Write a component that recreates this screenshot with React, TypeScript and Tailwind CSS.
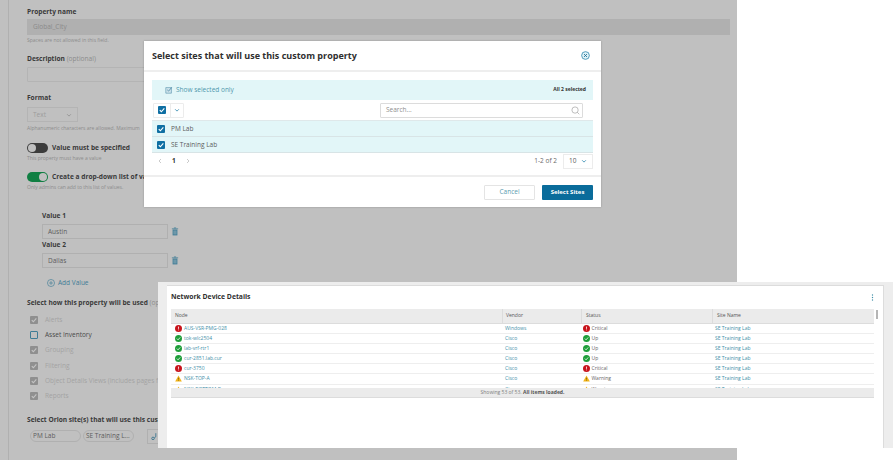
import React from "react";

const Check = ({ c = "white" }: { c?: string }) => (
  <svg viewBox="0 0 10 10" className="w-full h-full"><path d="M2.2 5.2 4.2 7.2 7.9 3" fill="none" stroke={c} strokeWidth="1.4" /></svg>
);

const Box = () => (
  <div className="w-[8px] h-[8px] rounded-[1px] bg-[#0f6fa3] shrink-0"><Check /></div>
);

const GrayCheck = ({ label }: { label: string }) => (
  <div className="h-[15.3px] flex items-center gap-[7px] pl-[3px]">
    <div className="w-[8px] h-[8px] rounded-[1px] bg-[#8f8f8f]"><Check c="#c4c4c4" /></div>
    <span className="text-[6.5px] text-[#a3a3a3] whitespace-nowrap">{label}</span>
  </div>
);

const Trash = ({ cls }: { cls: string }) => (
  <svg viewBox="0 0 10 12" className={cls}>
    <path d="M3.5 1.2h3M.8 2.4h8.4" stroke="#3f7c96" strokeWidth="1" fill="none" />
    <path d="M1.8 3.4h6.4v7.8H1.8z" fill="#3f7c96" />
    <path d="M3.6 4.6v5.4M5 4.6v5.4M6.4 4.6v5.4" stroke="#bcc8cc" strokeWidth=".6" />
  </svg>
);

const StatusIcon = ({ s }: { s: "Critical" | "Up" | "Warning" }) => {
  if (s === "Warning")
    return (
      <svg viewBox="0 0 8 8" className="w-[7px] h-[7px] shrink-0">
        <path d="M4 .6 7.8 7.5H.2z" fill="#f2b418" />
        <path d="M4 3v2.3M4 5.9v.7" stroke="#5b4a10" strokeWidth=".7" />
      </svg>
    );
  if (s === "Up")
    return (
      <svg viewBox="0 0 8 8" className="w-[7px] h-[7px] shrink-0">
        <circle cx="4" cy="4" r="4" fill="#1f9e3a" />
        <path d="M2.1 4.1 3.5 5.5 5.9 2.8" stroke="white" strokeWidth=".9" fill="none" />
      </svg>
    );
  return (
    <svg viewBox="0 0 8 8" className="w-[7px] h-[7px] shrink-0">
      <circle cx="4" cy="4" r="4" fill="#c8141c" />
      <path d="M4 1.8v2.6M4 5.2v.9" stroke="white" strokeWidth=".9" />
    </svg>
  );
};

const rows: [string, string, "Critical" | "Up" | "Warning"][] = [
  ["AUS-VSR-PMG-028", "Windows", "Critical"],
  ["tok-wlc2504", "Cisco", "Up"],
  ["lab-vrf-rtr1", "Cisco", "Up"],
  ["cur-2851.lab.cur", "Cisco", "Up"],
  ["cur-3750", "Cisco", "Critical"],
  ["NSK-TOP-A", "Cisco", "Warning"],
  ["NSK-BOTTOM-B", "Cisco", "Warning"],
];

const gridCols = "grid grid-cols-[331px_79px_131px_162px]";

export default function App() {
  return (
    <div className="relative w-[893px] h-[460px] overflow-hidden bg-white font-['Open_Sans',sans-serif]">
      {/* Dimmed page */}
      <div className="w-[737px] h-[460px] bg-[#c0c0c0] pl-[8px]">
        <div className="h-full border-l border-[#b0b0b0] pl-[18px] pr-[7px] pt-[7px]">
          <div className="text-[6.6px] leading-[10px] font-bold text-[#3a3a3a]">Property name</div>
          <div className="mt-[2px] h-[16px] bg-[#b0b0b0] flex items-center px-[6px] text-[6.5px] text-[#8a8a8a]">Global_City</div>
          <div className="mt-[1px] text-[5px] leading-[8px] text-[#8c8c8c]">Spaces are not allowed in this field.</div>

          <div className="mt-[10px] text-[6.6px] leading-[10px] font-bold text-[#3a3a3a]">
            Description <span className="font-normal text-[#8c8c8c]">(optional)</span>
          </div>
          <div className="mt-[3px] h-[15px] w-[200px] border border-[#b4b4b4] rounded-[1px]" />

          <div className="mt-[11px] text-[6.6px] leading-[10px] font-bold text-[#3a3a3a]">Format</div>
          <div className="mt-[4px] w-[51px] h-[15px] border border-[#b4b4b4] flex items-center justify-between px-[5px] text-[6.5px] text-[#9c9c9c]">
            Text
            <svg viewBox="0 0 8 8" className="w-[6px] h-[6px]"><path d="M1.5 3 4 5.5 6.5 3" stroke="#8a8a8a" fill="none" /></svg>
          </div>
          <div className="mt-[2px] text-[5px] leading-[8px] text-[#8c8c8c] whitespace-nowrap">Alphanumeric characters are allowed. Maximum</div>

          <div className="mt-[11px] flex items-center gap-[4px] h-[10px]">
            <div className="w-[21px] h-[10px] rounded-full bg-[#3c3c3c] flex items-center pl-[1px]">
              <div className="w-[8px] h-[8px] rounded-full bg-[#c0c0c0]" />
            </div>
            <span className="text-[6.6px] font-bold text-[#3a3a3a]">Value must be specified</span>
          </div>
          <div className="mt-[1px] text-[5px] leading-[8px] text-[#8c8c8c]">This property must have a value</div>

          <div className="mt-[10px] flex items-center gap-[4px] h-[10px]">
            <div className="w-[21px] h-[10px] rounded-full bg-[#107f43] flex items-center justify-end pr-[1px]">
              <div className="w-[8px] h-[8px] rounded-full bg-[#c0c0c0]" />
            </div>
            <span className="text-[6.6px] font-bold text-[#3a3a3a] whitespace-nowrap">Create a drop-down list of values</span>
          </div>
          <div className="mt-[1px] text-[5px] leading-[8px] text-[#8c8c8c]">Only admins can add to this list of values.</div>

          <div className="pl-[15px] mt-[20px]">
            <div className="text-[6.6px] leading-[10px] font-bold text-[#3a3a3a]">Value 1</div>
            <div className="mt-[3px] flex items-center gap-[3px]">
              <div className="w-[126px] h-[15px] border border-[#b0b0b0] flex items-center px-[5px] text-[6.5px] text-[#5c5c5c]">Austin</div>
              <Trash cls="w-[8px] h-[9px]" />
            </div>
            <div className="mt-[1px] text-[6.6px] leading-[10px] font-bold text-[#3a3a3a]">Value 2</div>
            <div className="mt-[3px] flex items-center gap-[3px]">
              <div className="w-[126px] h-[15px] border border-[#b0b0b0] flex items-center px-[5px] text-[6.5px] text-[#5c5c5c]">Dallas</div>
              <Trash cls="w-[8px] h-[9px]" />
            </div>
            <div className="mt-[10px] ml-[5px] flex items-center gap-[3px] h-[10px]">
              <svg viewBox="0 0 10 10" className="w-[8px] h-[8px]">
                <circle cx="5" cy="5" r="4.4" fill="none" stroke="#3f7c96" strokeWidth=".8" />
                <path d="M5 2.6v4.8M2.6 5h4.8" stroke="#3f7c96" strokeWidth=".8" />
              </svg>
              <span className="text-[6.5px] text-[#3f7c96]">Add Value</span>
            </div>
          </div>

          <div className="mt-[10px] text-[6.6px] leading-[10px] font-bold text-[#3a3a3a] whitespace-nowrap">
            Select how this property will be used <span className="font-normal text-[#8c8c8c]">(optional)</span>
          </div>
          <div className="mt-[4px]">
            <GrayCheck label="Alerts" />
            <div className="h-[15.3px] flex items-center gap-[7px] pl-[3px]">
              <div className="w-[8px] h-[8px] rounded-[1px] border border-[#3f7c96]" />
              <span className="text-[6.5px] text-[#4a4a4a]">Asset Inventory</span>
            </div>
            <GrayCheck label="Grouping" />
            <GrayCheck label="Filtering" />
            <GrayCheck label="Object Details Views (includes pages for" />
            <GrayCheck label="Reports" />
          </div>

          <div className="mt-[11px] text-[6.6px] leading-[10px] font-bold text-[#3a3a3a] whitespace-nowrap">Select Orion site(s) that will use this custom property</div>
          <div className="mt-[4px] flex items-center gap-[2px] pl-[3px]">
            <div className="w-[51px] h-[12px] rounded-full border border-[#b0b0b0] flex items-center px-[2px] text-[6.5px] text-[#5c5c5c]">PM Lab</div>
            <div className="w-[51px] h-[12px] rounded-full border border-[#b0b0b0] flex items-center px-[2px] text-[6.5px] text-[#5c5c5c] whitespace-nowrap">SE Training L...</div>
            <div className="ml-[11px] w-[16px] h-[15px] border border-[#b0b0b0] flex items-center justify-center">
              <svg viewBox="0 0 10 10" className="w-[8px] h-[8px]">
                <circle cx="2.5" cy="8" r="1.6" fill="none" stroke="#2f6f8c" />
                <path d="M4 7.5 6 6V1.5" stroke="#2f6f8c" fill="none" />
              </svg>
            </div>
          </div>
        </div>
      </div>

      {/* Modal */}
      <div className="absolute left-[144px] top-[41px] w-[457px] h-[166px] bg-white shadow-[0_0_2px_rgba(0,0,0,0.25)] flex flex-col">
        <div className="h-[31px] flex items-center justify-between pl-[8px] pr-[11px] border-b-2 border-[#eeeeee] shrink-0">
          <span className="text-[9px] font-bold text-[#2f2f2f]">Select sites that will use this custom property</span>
          <svg viewBox="0 0 10 10" className="w-[9px] h-[9px]">
            <circle cx="5" cy="5" r="4.3" fill="#dff1f6" stroke="#1f7fa8" strokeWidth=".8" />
            <path d="M3.4 3.4 6.6 6.6M6.6 3.4 3.4 6.6" stroke="#1f6f95" strokeWidth="1" />
          </svg>
        </div>

        <div className="px-[8px] pt-[8px] flex-1">
          <div className="h-[20px] bg-[#e2f6f8] flex items-center justify-between pl-[13px] pr-[7px]">
            <div className="flex items-center gap-[3px]">
              <svg viewBox="0 0 10 10" className="w-[8px] h-[8px]">
                <path d="M1 2h7v7H1z" fill="#cfe4ec" stroke="#4c8aa6" strokeWidth=".7" />
                <path d="M2.8 4.8 4.5 6.4 8.5 1.6" stroke="#3c7c9a" fill="none" strokeWidth=".9" />
              </svg>
              <span className="text-[6.5px] text-[#4f97ad]">Show selected only</span>
            </div>
            <span className="text-[5px] font-bold text-[#333333]">All 2 selected</span>
          </div>

          <div className="h-[20px] flex items-center justify-between">
            <div className="ml-[1px] h-[15px] w-[31px] flex border border-[#ececec] rounded-[1px]">
              <div className="w-[17px] flex items-center justify-center border-r border-[#ececec]"><Box /></div>
              <div className="flex-1 flex items-center justify-center">
                <svg viewBox="0 0 8 8" className="w-[6px] h-[6px]"><path d="M1.5 3 4 5.5 6.5 3" stroke="#1f7fa8" fill="none" strokeWidth="1" /></svg>
              </div>
            </div>
            <div className="mr-[10px] w-[203px] h-[15px] border border-[#dcdcdc] rounded-[1px] flex items-center justify-between pl-[5px] pr-[2px]">
              <span className="text-[6.5px] text-[#8f8f8f]">Search...</span>
              <svg viewBox="0 0 10 10" className="w-[9px] h-[9px]">
                <circle cx="4.5" cy="4.5" r="3.5" fill="none" stroke="#9a9a9a" strokeWidth=".7" />
                <path d="M7 7 9.2 9.2" stroke="#9a9a9a" strokeWidth=".7" />
              </svg>
            </div>
          </div>

          <div className="border-t border-[#dfe8ea]">
            <div className="h-[16px] bg-[#e2f6f8] border-b border-[#d8e4e6] flex items-center gap-[6px] pl-[5px]">
              <Box />
              <span className="text-[6.5px] text-[#5c5c5c]">PM Lab</span>
            </div>
            <div className="h-[16px] bg-[#e2f6f8] border-b border-[#d8e4e6] flex items-center gap-[6px] pl-[5px]">
              <Box />
              <span className="text-[6.5px] text-[#5c5c5c]">SE Training Lab</span>
            </div>
          </div>

          <div className="h-[16px] flex items-center justify-between">
            <div className="flex items-center gap-[10px] pl-[6px]">
              <svg viewBox="0 0 6 8" className="w-[4px] h-[6px]"><path d="M4.5 1 1.5 4l3 3" stroke="#b0b0b0" fill="none" /></svg>
              <span className="text-[6.5px] font-bold text-[#333333]">1</span>
              <svg viewBox="0 0 6 8" className="w-[4px] h-[6px]"><path d="M1.5 1l3 3-3 3" stroke="#b0b0b0" fill="none" /></svg>
            </div>
            <div className="flex items-center gap-[6px]">
              <span className="text-[6.5px] text-[#6a6a6a]">1-2 of 2</span>
              <div className="w-[30px] h-[15px] border border-[#ececec] flex items-center justify-between px-[5px]">
                <span className="text-[6.5px] text-[#5c5c5c]">10</span>
                <svg viewBox="0 0 8 8" className="w-[6px] h-[6px]"><path d="M1.5 3 4 5.5 6.5 3" stroke="#1f7fa8" fill="none" /></svg>
              </div>
            </div>
          </div>
        </div>

        <div className="h-[32px] border-t-2 border-[#eeeeee] flex items-center justify-end gap-[7px] pr-[8px] shrink-0">
          <div className="w-[51px] h-[15px] border border-[#e4e4e4] rounded-[1px] flex items-center justify-center text-[6.5px] text-[#5b9bb0]">Cancel</div>
          <div className="w-[51px] h-[15px] bg-[#0a6c9b] rounded-[1px] flex items-center justify-center text-[6px] font-bold text-white">Select Sites</div>
        </div>
      </div>

      {/* Network Device Details */}
      <div className="absolute left-[158px] top-[282px] w-[735px] h-[166px] bg-[#ededed] pl-[9px] pr-[9px] pt-[3px]">
        <div className="h-full bg-white border-t border-r border-[#dcdcdc] pl-[4px]">
          <div className="h-[23px] flex items-center justify-between pr-[9px]">
            <span className="text-[6.8px] font-bold text-[#2f2f2f]">Network Device Details</span>
            <svg viewBox="0 0 4 10" className="w-[3px] h-[7px]">
              <circle cx="2" cy="1.5" r="1" fill="#3f8fa8" />
              <circle cx="2" cy="5" r="1" fill="#3f8fa8" />
              <circle cx="2" cy="8.5" r="1" fill="#3f8fa8" />
            </svg>
          </div>
          <div className="flex">
            <div className="w-[703px]">
              <div className={`${gridCols} h-[15px] bg-[#ebebeb] border-b border-[#dcdcdc] text-[5px] text-[#555555]`}>
                <div className="flex items-center pl-[4px]">Node</div>
                <div className="flex items-center pl-[3px] border-l border-[#dcdcdc]">Vendor</div>
                <div className="flex items-center pl-[4px] border-l border-[#dcdcdc]">Status</div>
                <div className="flex items-center pl-[4px] border-l border-[#dcdcdc]">Site Name</div>
              </div>
              <div className="h-[64px] overflow-hidden">
                {rows.map(([n, v, s]) => (
                  <div key={n} className={`${gridCols} h-[10.1px] pb-[1px] border-b border-[#eeeeee] text-[5px] leading-[9px]`}>
                    <div className="flex items-center gap-[2px] pl-[4px] text-[#3f8fa8]"><StatusIcon s={s} />{n}</div>
                    <div className="pl-[3px] text-[#3f8fa8]">{v}</div>
                    <div className="flex items-center gap-[2px] pl-[1.5px] text-[#666666]"><StatusIcon s={s} />{s}</div>
                    <div className="pl-[3px] text-[#3f8fa8]">SE Training Lab</div>
                  </div>
                ))}
              </div>
              <div className="h-[10px] bg-[#ebebeb] border-b border-[#dcdcdc] flex items-center justify-center text-[5px] text-[#808080]">
                <span>Showing 53 of 53. <span className="font-bold text-[#555555]">All items loaded.</span></span>
              </div>
            </div>
            <div className="ml-[2px] w-[2px] h-[9px] mt-[1px] bg-[#b5b5b5]" />
          </div>
        </div>
      </div>
    </div>
  );
}
